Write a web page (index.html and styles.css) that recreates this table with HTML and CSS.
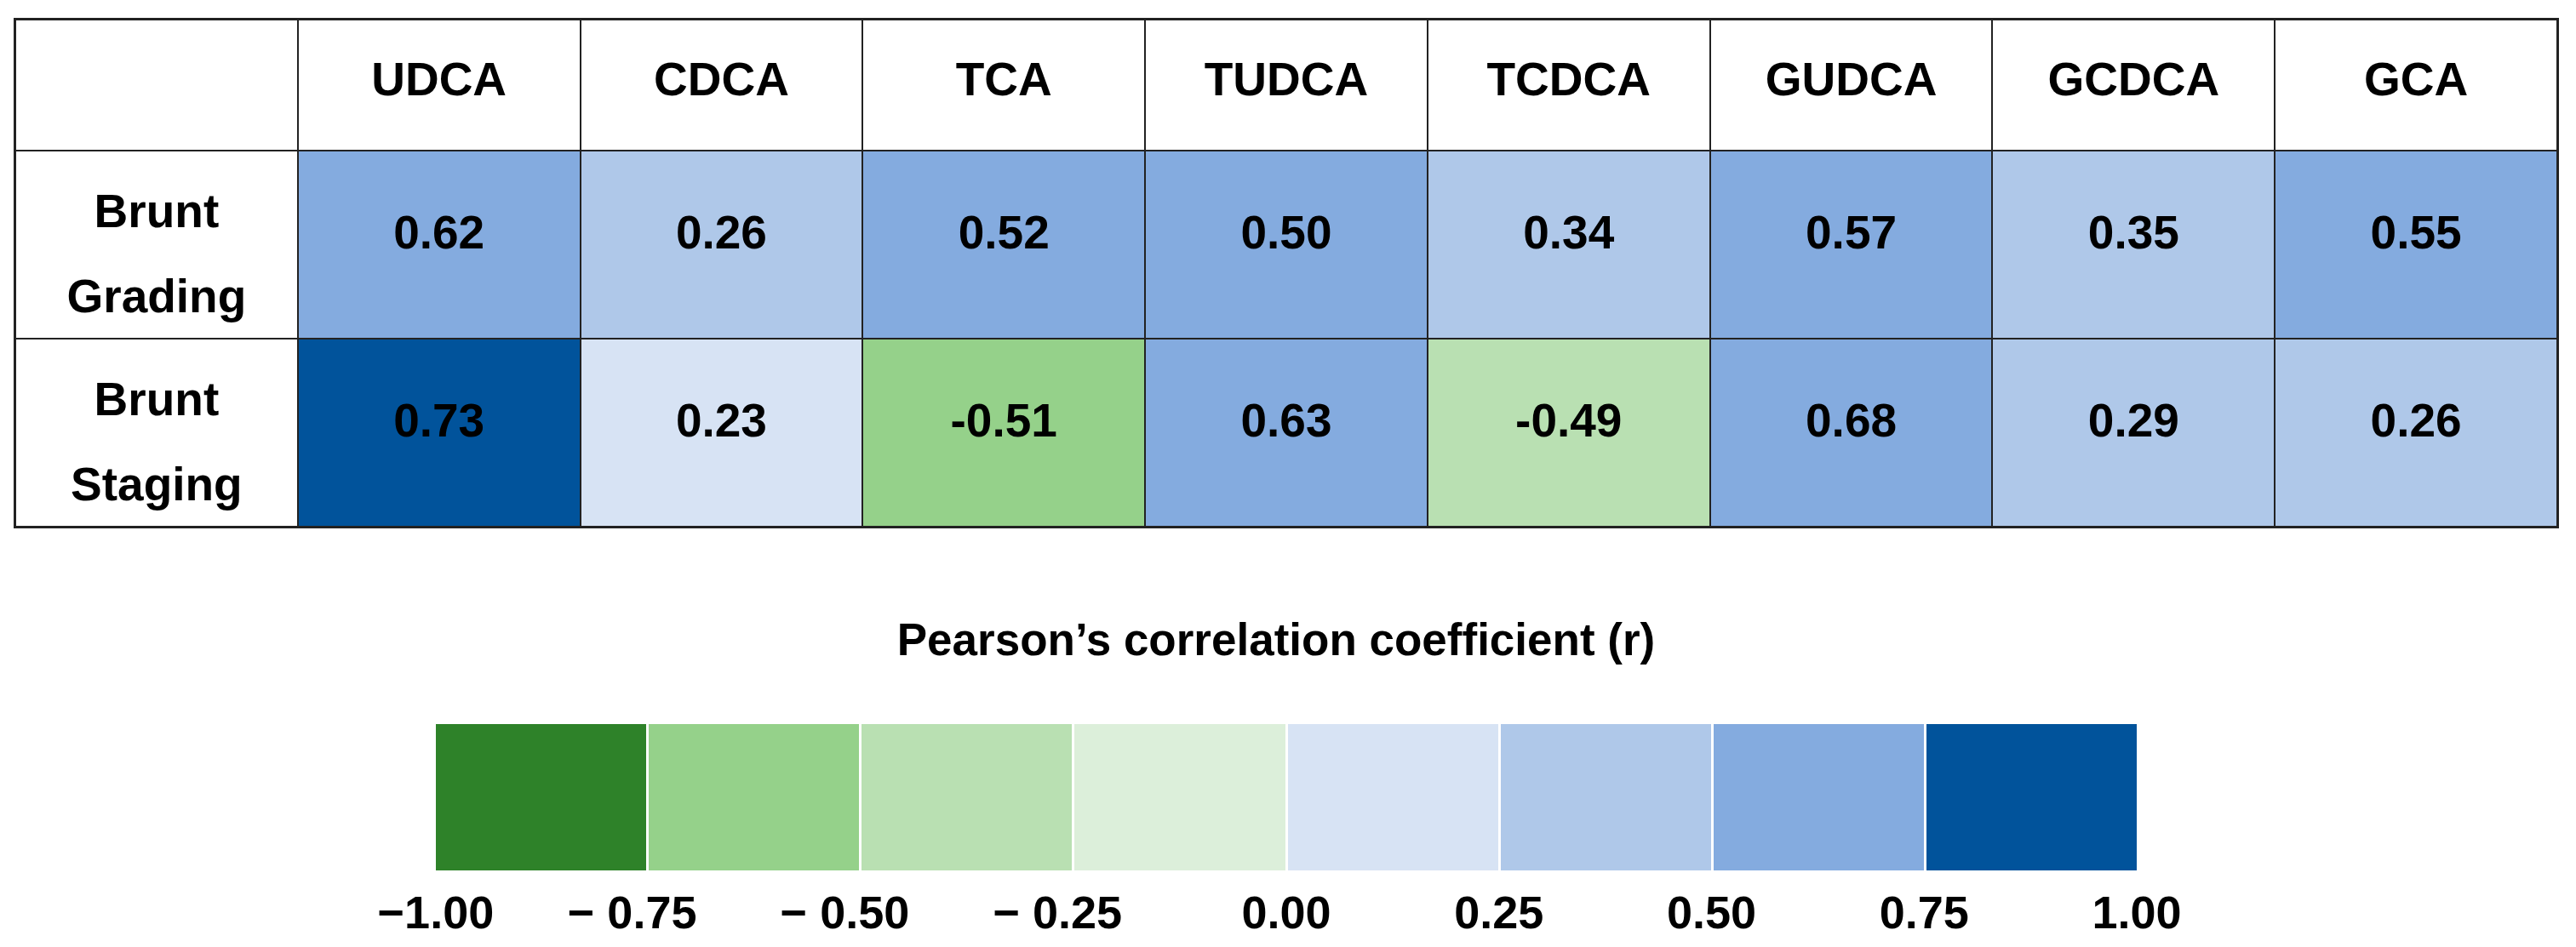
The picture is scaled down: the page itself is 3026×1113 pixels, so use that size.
FILE: index.html
```html
<!DOCTYPE html>
<html lang="en">
<head>
<meta charset="utf-8">
<title>Bile acid correlation heatmap</title>
<link rel="stylesheet" href="styles.css">
</head>
<body>
<div class="page">
  <div class="heatmap">
    <div class="cell head corner"></div>
    <div class="cell head">UDCA</div>
    <div class="cell head">CDCA</div>
    <div class="cell head">TCA</div>
    <div class="cell head">TUDCA</div>
    <div class="cell head">TCDCA</div>
    <div class="cell head">GUDCA</div>
    <div class="cell head">GCDCA</div>
    <div class="cell head">GCA</div>

    <div class="cell label"><span>Brunt</span><span>Grading</span></div>
    <div class="cell val b3">0.62</div>
    <div class="cell val b2">0.26</div>
    <div class="cell val b3">0.52</div>
    <div class="cell val b3">0.50</div>
    <div class="cell val b2">0.34</div>
    <div class="cell val b3">0.57</div>
    <div class="cell val b2">0.35</div>
    <div class="cell val b3">0.55</div>

    <div class="cell label"><span>Brunt</span><span>Staging</span></div>
    <div class="cell val b4">0.73</div>
    <div class="cell val b1">0.23</div>
    <div class="cell val g3">-0.51</div>
    <div class="cell val b3">0.63</div>
    <div class="cell val g2">-0.49</div>
    <div class="cell val b3">0.68</div>
    <div class="cell val b2">0.29</div>
    <div class="cell val b2">0.26</div>
  </div>

  <div class="legend">
    <div class="legend-title">Pearson’s correlation coefficient (r)</div>
    <div class="scale">
      <div class="swatch g4"></div>
      <div class="swatch g3"></div>
      <div class="swatch g2"></div>
      <div class="swatch g1"></div>
      <div class="swatch b1"></div>
      <div class="swatch b2"></div>
      <div class="swatch b3"></div>
      <div class="swatch b4"></div>
    </div>
    <div class="ticks">
      <span class="tick">−1.00</span>
      <span class="tick neg">− 0.75</span>
      <span class="tick neg">− 0.50</span>
      <span class="tick neg">− 0.25</span>
      <span class="tick">0.00</span>
      <span class="tick">0.25</span>
      <span class="tick">0.50</span>
      <span class="tick">0.75</span>
      <span class="tick">1.00</span>
    </div>
  </div>
</div>
</body>
</html>
```

FILE: styles.css
```css
html, body {
  margin: 0;
  padding: 0;
  background: #ffffff;
}

body {
  font-family: "Liberation Sans", Arial, sans-serif;
  font-weight: 700;
  color: #000000;
}

.page {
  padding: 21px 0 0 16px;
}

.heatmap {
  display: grid;
  box-sizing: border-box;
  width: 2990px;
  grid-template-columns: repeat(9, 1fr);
  grid-template-rows: 152px 219px 219px;
  gap: 2px;
  padding: 3px;
  background: #222222;
}

.cell {
  display: flex;
  align-items: center;
  justify-content: center;
  background: #ffffff;
  font-size: 55px;
  line-height: 60px;
  box-sizing: border-box;
}

.head {
  padding-bottom: 14px;
}

.val {
  padding-bottom: 30px;
}

.label {
  flex-direction: column;
  line-height: 100px;
  padding-top: 20px;
}

/* colour scale */
.g4 { background: #2e8229; }
.g3 { background: #95d18a; }
.g2 { background: #b9e0b2; }
.g1 { background: #dcefda; }
.b1 { background: #d7e3f4; }
.b2 { background: #afc8e9; }
.b3 { background: #84abdf; }
.b4 { background: #01539b; }

.legend {
  width: 1998px;
  margin: 101px 0 0 496px;
}

.legend-title {
  font-size: 53px;
  line-height: 60px;
  text-align: center;
  padding-right: 24px;
}

.scale {
  display: flex;
  gap: 3px;
  height: 172px;
  margin-top: 69px;
}

.swatch {
  flex: 1;
}

.ticks {
  display: grid;
  grid-template-columns: repeat(9, 1fr);
  margin: 19px -125px 0;
  font-size: 54px;
  line-height: 60px;
  text-align: center;
}

.tick {
  white-space: pre;
}

.neg {
  padding-right: 38px;
}
```
